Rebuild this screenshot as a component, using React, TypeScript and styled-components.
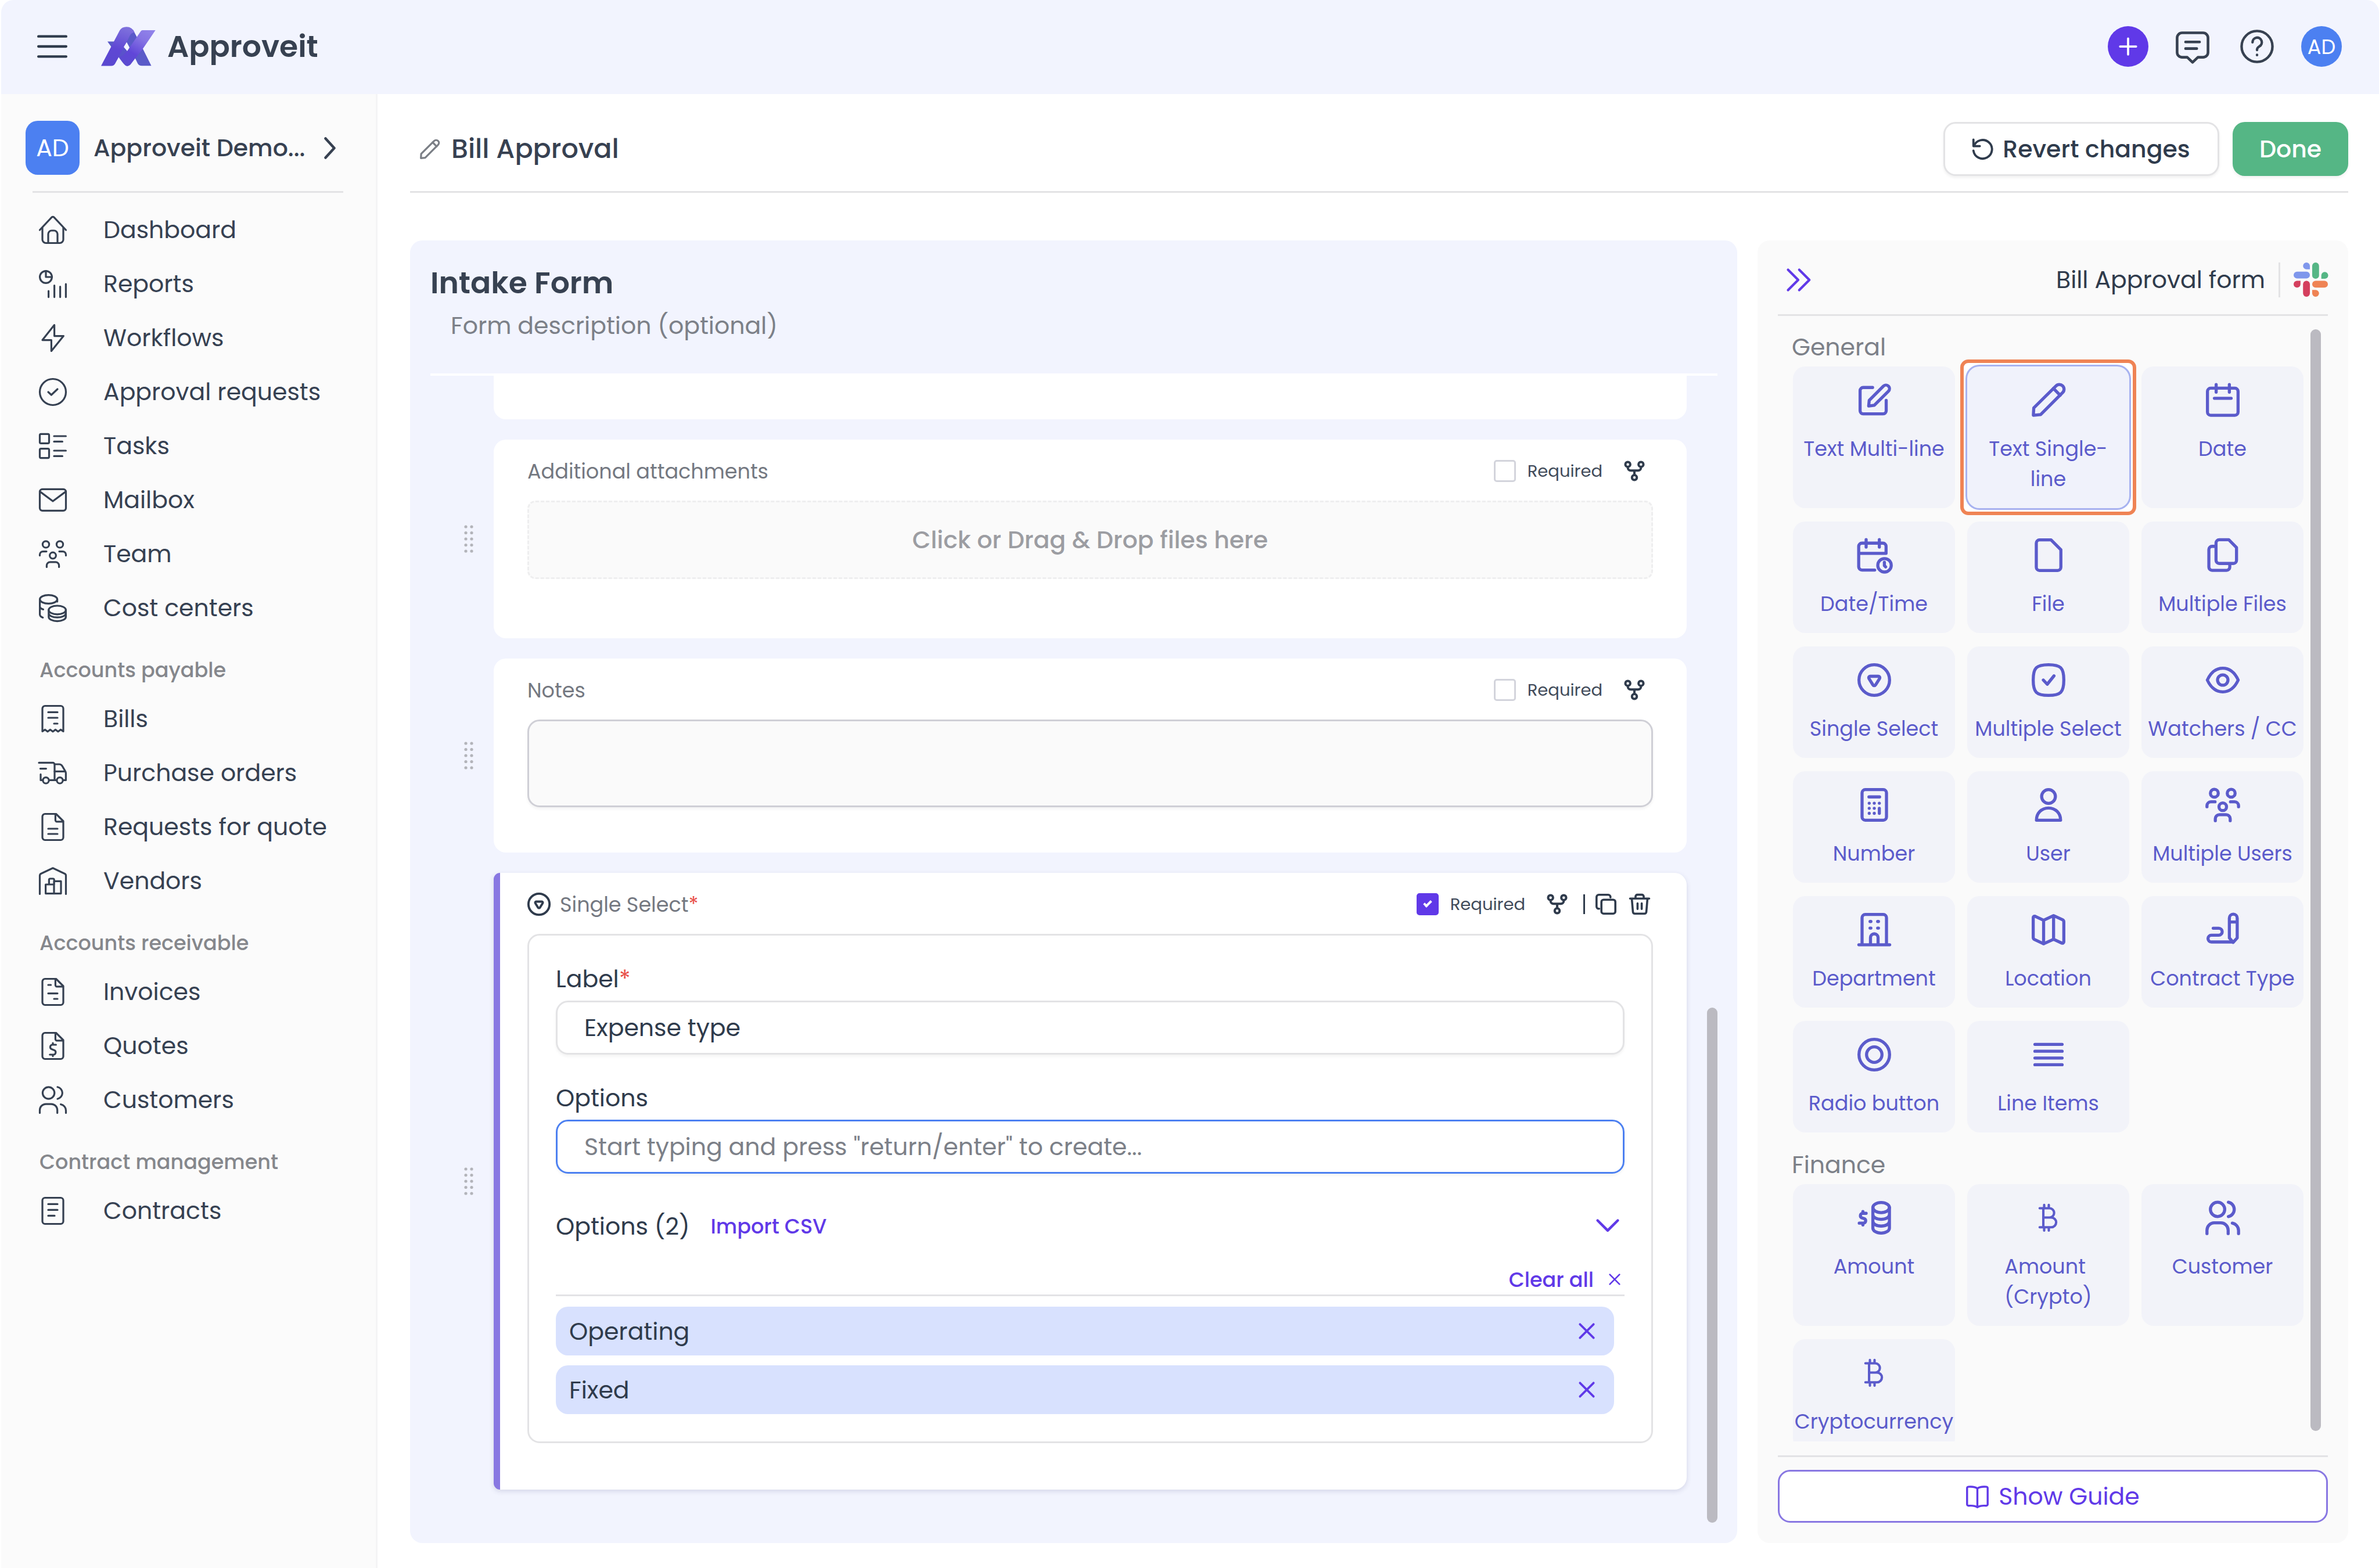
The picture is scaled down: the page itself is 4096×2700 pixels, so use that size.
import React, { useState } from "react";
import styled, { createGlobalStyle, css } from "styled-components";

const color = {
  ink: "#2f3b4c",
  nav: "#364152",
  heading: "#374151",
  muted: "#7c8088",
  line: "#e3e3e5",
  lavender: "#f2f4fe",
  panel: "#fafafa",
  indigo: "#5b5bcb",
  violet: "#6039e8",
  violetSoft: "#8877e2",
  blue: "#4c80f1",
  green: "#55b685",
  thumb: "#bbbac1",
};

const text = { sm: "29px", md: "35px", base: "41px", title: "46px", lg: "52px" };
const radius = "21px";

const GlobalStyle = createGlobalStyle`
  *, *::before, *::after { box-sizing: border-box; }
  html, body { margin: 0; background: #ffffff; }
  body, button, input, textarea {
    font-family: Poppins, Inter, "Open Sans", sans-serif;
    font-size: ${text.base};
    color: ${color.ink};
  }
  button { border: 0; padding: 0; background: none; cursor: pointer; }
  h1, h2, h3, p, ul { margin: 0; padding: 0; }
  ul { list-style: none; }
  a { color: inherit; text-decoration: none; }
  svg { display: block; flex: none; overflow: visible; }
`;

/* ---------- Icons ---------- */

const Stroke = styled.svg<{ $size: number; $weight: number }>`
  width: ${(p) => p.$size}px;
  height: ${(p) => p.$size}px;
  fill: none;
  stroke: currentColor;
  stroke-width: ${(p) => p.$weight};
  stroke-linecap: round;
  stroke-linejoin: round;
`;

const sheet =
  "M5.25.75h9.5L21 7v14a2.25 2.25 0 0 1-2.25 2.25H5.25A2.25 2.25 0 0 1 3 21V3A2.25 2.25 0 0 1 5.25.75z M14.2.9v5.2a1.3 1.3 0 0 0 1.3 1.3h5.3";

const glyphs: Record<string, React.ReactNode> = {
  menu: <path d="M1 4h22M1 12h22M1 20h22" />,
  plus: <path d="M12 1v22M1 12h22" />,
  close: <path d="M2 2l20 20M22 2L2 22" />,
  chevronRight: <path d="M7 1l10 11L7 23" />,
  chevronDown: <path d="M1 6l11 11L23 6" />,
  chevronsRight: <path d="M2 2l10 10L2 22M13 2l10 10-10 10" />,
  chat: (
    <>
      <path d="M4.5 2.3h15A3.5 3.5 0 0 1 23 5.8v10.4a3.5 3.5 0 0 1-3.5 3.5h-3.7L12 23.3l-3.8-3.6H4.5A3.5 3.5 0 0 1 1 16.2V5.8a3.5 3.5 0 0 1 3.5-3.5z" />
      <path d="M7 8.8h10M7 13.5h8" />
    </>
  ),
  help: (
    <>
      <circle cx="12" cy="12" r="11" />
      <path d="M8.8 9a3.3 3.3 0 1 1 4.9 2.9c-1 .6-1.7 1.2-1.7 2.6" />
      <path d="M12 18v.1" />
    </>
  ),
  home: (
    <>
      <path d="M.75 12L10.9 1.2a1.5 1.5 0 0 1 2.2 0L23.25 12" />
      <path d="M3 10v10.25a3 3 0 0 0 3 3h12a3 3 0 0 0 3-3V10" />
      <path d="M8 23.25V15.5a3 3 0 0 1 3-3h2a3 3 0 0 1 3 3v7.75" />
    </>
  ),
  reports: (
    <>
      <circle cx="6" cy="6" r="5.2" />
      <path d="M6 .8V6h5.2M8.3 18v5.3M13.3 13.3v10M18.3 14.3v9M23.2 12v11.3" />
    </>
  ),
  bolt: <path d="M13.3.75L3 13.8h7.7v9.4L21.2 10.3h-7.9z" />,
  checkCircle: (
    <>
      <circle cx="12" cy="12" r="11.25" />
      <path d="M8 12l2.7 2.5L16 9.5" />
    </>
  ),
  tasks: (
    <>
      <rect x=".75" y="1.7" width="8" height="8" rx="1" />
      <rect x=".75" y="14.3" width="8" height="8" rx="1" />
      <path d="M13 3.5h10.2M13 8.2h7.2M13 16h10.2M13 20.7h7.2" />
    </>
  ),
  mail: (
    <>
      <rect x=".75" y="2.7" width="22.5" height="18.5" rx="2.3" />
      <path d="M1.5 5.2L12 13l10.5-7.8" />
    </>
  ),
  team: (
    <>
      <circle cx="6" cy="3.7" r="2.8" />
      <circle cx="18" cy="3.7" r="2.8" />
      <circle cx="12" cy="13.3" r="2.7" />
      <path d="M.75 13.3v-.8A2.8 2.8 0 0 1 3.5 9.8h3M23.25 13.3v-.8a2.8 2.8 0 0 0-2.75-2.7h-3M6.7 23.25v-1.4a2.9 2.9 0 0 1 2.9-2.9h4.8a2.9 2.9 0 0 1 2.9 2.9v1.4" />
    </>
  ),
  coins: (
    <>
      <ellipse cx="8.3" cy="4.5" rx="7.5" ry="3.7" />
      <path d="M.8 4.5v13c0 1.2.9 2.1 2.6 2.7M.8 10.5c0 1.2 1 2.1 2.9 2.7M15.8 4.7v1.8" />
      <ellipse cx="15.8" cy="13.7" rx="7.4" ry="3.7" />
      <path d="M8.4 13.7v5.9c0 2 3.3 3.7 7.4 3.7s7.4-1.7 7.4-3.7v-5.9M8.4 16.5c0 2 3.3 3.6 7.4 3.6s7.4-1.6 7.4-3.6" />
    </>
  ),
  receipt: (
    <>
      <path d="M3 22.7V3A2.25 2.25 0 0 1 5.25.75h13.5A2.25 2.25 0 0 1 21 3v19.7l-2.2-1.5-2.3 1.7-2.2-1.7-2.3 1.7-2.2-1.7-2.3 1.7-2.2-1.7z" />
      <path d="M8 6.2h8M8 11h8M13 16h3" />
    </>
  ),
  truck: (
    <>
      <path d="M0 3.2h12a1.5 1.5 0 0 1 1.5 1.5v13.5M1.2 8.3h5M1.5 13.2v5h2M8.7 18.2h6.7" />
      <path d="M13.5 4.5h4a3 3 0 0 1 2.5 1.4l2.6 4.4c.4.6.6 1.2.6 1.9v6h-2.5M13.5 10.7h9" />
      <circle cx="6" cy="18.4" r="2.6" />
      <circle cx="18" cy="18.4" r="2.6" />
    </>
  ),
  fileText: <path d={`${sheet}M8 13.5h8M8 18h8`} />,
  warehouse: (
    <>
      <path d="M.75 23.25V7.4c0-.8.5-1.5 1.2-1.8L12 .9l10 4.7c.8.3 1.25 1 1.25 1.8v15.85" />
      <path d="M5.8 15h7.2v7.8H5.8zM8.7 15V11a1 1 0 0 1 1-1h2.4a1 1 0 0 1 1 1v4M13 12.2h6v10.6h-6z" />
    </>
  ),
  invoice: <path d={`${sheet}M8 6h2.3M8 13.3h8M13 18h3`} />,
  quote: (
    <>
      <path d={sheet} />
      <path d="M14.7 11h-3.2a2 2 0 0 0-.6 3.800l2.4.9a2 2 0 0 1-.7 3.8H9.4M12 9.500V11M12 19.500v1.300" />
    </>
  ),
  people: (
    <>
      <circle cx="8.3" cy="6" r="5.1" />
      <path d="M16 .9a5.2 5.2 0 0 1 0 10.2M.75 23.25v-2.5a5.2 5.2 0 0 1 5.2-5.2h4.7a5.2 5.2 0 0 1 5.2 5.2v2.5M18.8 15.8a5.4 5.4 0 0 1 4.45 5.3v2.15" />
    </>
  ),
  contract: (
    <>
      <rect x="3" y=".75" width="18" height="22.5" rx="2.25" />
      <path d="M8 6.2h8M8 11.2h8M8 16.2h5.5" />
    </>
  ),
  pencil: (
    <>
      <path d="M1.2 22.8l.3-5.3L17.3 1.9a3.3 3.3 0 0 1 4.8 4.7L6.4 22.3z" />
      <path d="M15.5 3.7l4.8 4.8" />
    </>
  ),
  undo: (
    <>
      <path d="M1.2 1v7.6h7.5" />
      <path d="M1.8 8.5A11 11 0 1 1 1.2 14" />
    </>
  ),
  fork: (
    <>
      <circle cx="4" cy="4" r="3" />
      <circle cx="20" cy="4" r="3" />
      <circle cx="12" cy="20" r="3" />
      <path d="M4 7v1a3.5 3.5 0 0 0 3.5 3.5h9A3.5 3.5 0 0 0 20 8V7M12 11.5V17" />
    </>
  ),
  copy: (
    <>
      <rect x="6.8" y="6.8" width="16" height="16" rx="2.5" />
      <path d="M4.2 17.2h-.5a2.5 2.5 0 0 1-2.5-2.5v-11a2.5 2.5 0 0 1 2.5-2.5h11a2.5 2.5 0 0 1 2.5 2.5v.5" />
    </>
  ),
  trash: (
    <path d="M1 5.5h22M3 5.5l1.3 15.2a2.3 2.3 0 0 0 2.3 2.1h10.8a2.3 2.3 0 0 0 2.3-2.1L21 5.5M7.3 5.5V3.3a2.2 2.2 0 0 1 2.2-2.2h5a2.2 2.2 0 0 1 2.2 2.2v2.2M9.6 11v6.5M14.4 11v6.5" />
  ),
  selectCircle: (
    <>
      <circle cx="12" cy="12" r="10.9" />
      <path d="M9.1 9.3h5.8c.9 0 1.3.9.9 1.6l-2.8 4.5c-.5.8-1.5.8-2 0l-2.8-4.5c-.4-.7 0-1.6.9-1.6z" />
    </>
  ),
  edit: (
    <>
      <path d="M10.8 3H4.1a2.2 2.2 0 0 0-2.2 2.2v14.4a2.2 2.2 0 0 0 2.2 2.2h14.2a2.2 2.2 0 0 0 2.2-2.2v-7.4" />
      <path d="M8 16.2l.4-4L18.5 2a2.5 2.5 0 0 1 3.6 3.6L12 15.7z" />
    </>
  ),
  calendar: (
    <>
      <rect x="1.1" y="3.5" width="21.8" height="19.3" rx="2.3" />
      <path d="M7.3.9v5.4M16.7.9v5.4M6 10.7h12" />
    </>
  ),
  calendarClock: (
    <>
      <path d="M12.3 22.6H3.2a2.3 2.3 0 0 1-2.3-2.3V5.7a2.3 2.3 0 0 1 2.3-2.3h14.9a2.3 2.3 0 0 1 2.3 2.3v5H1M6.2.9v5.3M15.6.9v5.3" />
      <circle cx="19.3" cy="19.2" r="4.8" />
      <path d="M19.2 17v2.4l.9.9" />
    </>
  ),
  file: (
    <path d="M5.6 1.1h8.2l7 7v12.5a2.3 2.3 0 0 1-2.3 2.3H5.6a2.3 2.3 0 0 1-2.3-2.3V3.4a2.3 2.3 0 0 1 2.3-2.3z" />
  ),
  files: (
    <>
      <path d="M9.5 1h6.8l5.5 5.6v9a2.3 2.3 0 0 1-2.3 2.3h-10a2.3 2.3 0 0 1-2.3-2.3V3.3A2.3 2.3 0 0 1 9.5 1z" />
      <path d="M6.8 5.7H4.4a2.3 2.3 0 0 0-2.3 2.3v12.5a2.3 2.3 0 0 0 2.3 2.3h10.3a2.3 2.3 0 0 0 2.3-2.3v-2.3" />
    </>
  ),
  checkSquare: (
    <>
      <path d="M12 1.1c8.7 0 10.9 2.2 10.9 10.9S20.7 22.9 12 22.9 1.1 20.7 1.1 12 3.3 1.1 12 1.1z" />
      <path d="M8.3 12l2.8 3 4.8-6" />
    </>
  ),
  eye: (
    <>
      <path d="M1 12c2.4-5.2 6.2-8.4 11-8.4S20.6 6.8 23 12c-2.4 5.2-6.2 8.4-11 8.4S3.4 17.2 1 12z" />
      <circle cx="12" cy="12" r="3.7" />
    </>
  ),
  calculator: (
    <>
      <rect x="3.3" y="1.1" width="17.4" height="21.8" rx="2.3" />
      <path d="M8.2 6.3h7.6M8.4 10.8v.01M12 10.8v.01M15.6 10.8v.01M8.4 14.4v.01M12 14.4v.01M8.4 18v.01M12 18v.01M15.6 14.4V18" />
    </>
  ),
  user: (
    <>
      <circle cx="12" cy="6" r="4.9" />
      <path d="M3.4 22.9c0-5.1 3.7-8.7 8.6-8.7s8.6 3.6 8.6 8.7z" />
    </>
  ),
  building: (
    <path d="M3.3 22.6V3.4a2.3 2.3 0 0 1 2.3-2.3h12.8a2.3 2.3 0 0 1 2.3 2.3v19.2M1 22.7h22M9.3 22.6v-5a2.7 2.7 0 0 1 5.4 0v5M9 6.1h.6M14.4 6.1h.6M9 10.8h.6M14.4 10.8h.6" />
  ),
  map: (
    <path d="M8.5 5.2L2.5 2.4c-.7-.3-1.4.2-1.4.9v14.2c0 .7.4 1.2 1 1.5l6.4 3 7.1-3.2 5.9 2.7c.7.3 1.4-.2 1.4-.9V6.3c0-.7-.4-1.2-1-1.5l-6.3-2.9zM8.5 5.2V22M15.6 1.9v16.9" />
  ),
  signature: (
    <>
      <path d="M5.2 10.9h3.9a2.5 2.5 0 0 1 0 5H3.9a2.4 2.4 0 0 0 0 4.8h15.5" />
      <path d="M16.7 17.8V3.7a2.8 2.8 0 0 1 5.6 0v14.1l-2.9 3.2zM16.7 6.5h5.6" />
    </>
  ),
  radio: (
    <>
      <circle cx="12" cy="12" r="10.9" />
      <circle cx="12" cy="12" r="5.5" />
    </>
  ),
  lines: <path d="M2.3 4.7h19.4M2.3 9.6h19.4M2.3 14.4h19.4M2.3 19.2h19.4" />,
  amount: (
    <>
      <ellipse cx="16.9" cy="4.7" rx="5.9" ry="3.6" />
      <path d="M11 4.7v14.6c0 2 2.6 3.6 5.9 3.6s5.9-1.6 5.9-3.6V4.7M11 9.6c0 2 2.6 3.5 5.9 3.5s5.9-1.5 5.9-3.5M11 14.4c0 2 2.6 3.5 5.9 3.5s5.9-1.5 5.9-3.5" />
      <path d="M6.2 8.8H3.5a1.7 1.7 0 0 0-.4 3.2l1.8.6a1.7 1.7 0 0 1-.4 3.2H1.3M3.9 7.5v1.3M3.9 15.8v1.3" />
    </>
  ),
  bitcoin: (
    <path d="M5.7 5.2h7a3.3 3.3 0 0 1 0 6.6H8.3M12.7 11.8h1.3a3.4 3.4 0 0 1 0 6.9H5.7M8.3 5.2v13.5M8.9 2.8v2.4M12.2 2.8v2.4M8.9 18.700v2.400M12.2 18.700v2.400" />
  ),
  book: (
    <path d="M12 3.8C10 2 6.5 1.6 2.5 1.9c-.8.1-1.4.7-1.4 1.5v17.2c0 .8.7 1.4 1.5 1.4 3.9-.3 7.4.1 9.4 1.7M12 3.8c2-1.8 5.5-2.2 9.5-1.9.8.1 1.4.7 1.4 1.5v17.2c0 .8-.7 1.4-1.5 1.4-3.9-.3-7.4.1-9.4 1.7M12 3.8v19.9" />
  ),
};

function Icon({ name, size = 48, weight = 1.6 }: { name: string; size?: number; weight?: number }) {
  return (
    <Stroke viewBox="0 0 24 24" $size={size} $weight={weight} aria-hidden="true">
      {glyphs[name]}
    </Stroke>
  );
}

function BrandMark() {
  return (
    <svg width="94" height="68" viewBox="92 72 528 382" aria-hidden="true">
      <defs>
        <linearGradient id="legGradient" x1="0.6" y1="0" x2="0.3" y2="1">
          <stop offset="0" stopColor="#7d6fdc" />
          <stop offset="0.55" stopColor="#5f47d4" />
          <stop offset="1" stopColor="#5a48d0" />
        </linearGradient>
        <linearGradient id="armGradient" x1="0.9" y1="0" x2="0.3" y2="1">
          <stop offset="0" stopColor="#9183ea" />
          <stop offset="0.3" stopColor="#8674e4" />
          <stop offset="0.7" stopColor="#6046d8" />
          <stop offset="1" stopColor="#5c4bd0" />
        </linearGradient>
      </defs>
      <path d="M154 215h66l122 90-80 62z" fill="#5a5ac8" />
      <path d="M400 100l40 75 56 110 82 165H486q-28 0-40-22l-18-38-90-170 20-80z" fill="#5a5ac8" />
      <path d="M92 451h98q26 0 38-22l34-62 76-142 28-58q14-34 38-38l12-2q-22-54-78-54-46 0-66 36z" fill="url(#legGradient)" />
      <path d="M618 106H492q-10 0-16 10L346 305l-84 62q34 46 52 68 28 36 62 4l40-52 82-104z" fill="url(#armGradient)" />
      <path d="M312 270l-50 97q40-4 84-62z" fill="#5a52cb" />
      <path d="M340 224l24 44-20 38-32-40z" fill={color.lavender} />
    </svg>
  );
}

function SlackMark() {
  return (
    <svg width="59" height="59" viewBox="0 0 60 60" aria-label="Slack" role="img">
      <g fill="#7f97ec">
        <path d="M22.5 0a6 6 0 0 1 6 6v6h-6a6 6 0 0 1 0-12z" />
        <rect x="0" y="16" width="28.5" height="12" rx="6" />
      </g>
      <g fill="#55b685">
        <rect x="32.5" y="0" width="12" height="28.5" rx="6" />
        <path d="M48.5 28.5v-6a6 6 0 1 1 6 6z" />
      </g>
      <g fill="#d43f5e">
        <path d="M0 38a6 6 0 0 1 6-6h6v6a6 6 0 0 1-12 0z" />
        <rect x="16.5" y="32" width="12" height="28" rx="6" />
      </g>
      <g fill="#ef8354">
        <rect x="32.5" y="32" width="27.5" height="12" rx="6" />
        <path d="M32.5 48h6a6 6 0 1 1-6 6z" />
      </g>
    </svg>
  );
}

/* ---------- Frame ---------- */

const Shell = styled.div`
  display: flex;
  flex-direction: column;
  height: 100vh;
  padding-left: 2px;
  background: #ffffff;
`;

const TopBar = styled.header`
  display: flex;
  align-items: center;
  justify-content: space-between;
  flex: none;
  height: 162px;
  padding: 0 64px 2px 62px;
  background: ${color.lavender};
  border-radius: ${radius} ${radius} 0 0;
`;

const BarGroup = styled.div<{ $gap: number }>`
  display: flex;
  align-items: center;
  gap: ${(p) => p.$gap}px;
`;

const Brand = styled.a`
  display: flex;
  align-items: center;
  gap: 20px;
  font-size: ${text.lg};
  font-weight: 600;
  color: ${color.heading};
`;

const RoundButton = styled.button<{ $fill?: string }>`
  display: flex;
  align-items: center;
  justify-content: center;
  width: 70px;
  height: 70px;
  border-radius: 50%;
  background: ${(p) => p.$fill ?? "transparent"};
  color: ${(p) => (p.$fill ? "#ffffff" : color.heading)};
  font-size: ${text.md};
`;

const Body = styled.div`
  display: flex;
  flex: 1;
  min-height: 0;
`;

/* ---------- Sidebar ---------- */

const Sidebar = styled.nav`
  flex: none;
  width: 648px;
  padding: 46px 56px 0 42px;
  background: #fbfbfb;
  border-right: 3px solid #f4f4f5;
  color: ${color.nav};
`;

const Workspace = styled.button`
  display: flex;
  align-items: center;
  width: 100%;
  padding-right: 6px;
  gap: 24px;
  font-weight: 500;
  color: ${color.heading};
`;

const WorkspaceBadge = styled.span`
  display: grid;
  place-items: center;
  flex: none;
  width: 93px;
  height: 93px;
  border-radius: ${radius};
  background: ${color.blue};
  color: #ffffff;
  font-weight: 400;
`;

const WorkspaceName = styled.span`
  flex: 1;
  text-align: left;
  white-space: nowrap;
`;

const Rule = styled.hr`
  height: 3px;
  margin: 28px 0 17px 12px;
  border: 0;
  background: ${color.line};
`;

const NavSection = styled.h3`
  height: 98px;
  padding: 36px 0 0 24px;
  font-size: ${text.md};
  line-height: 50px;
  font-weight: 500;
  color: #85878c;
`;

const NavLink = styled.a`
  display: flex;
  align-items: center;
  gap: 63px;
  height: 93px;
  padding-left: 23px;
  white-space: nowrap;
`;

/* ---------- Main ---------- */

const Main = styled.main`
  display: flex;
  flex-direction: column;
  flex: 1;
  min-width: 0;
  padding: 0 53px 43px 56px;
`;

const PageHead = styled.div`
  display: flex;
  align-items: center;
  justify-content: space-between;
  flex: none;
  height: 170px;
  padding-top: 22px;
  border-bottom: 3px solid ${color.line};
`;

const PageTitle = styled.h1`
  display: flex;
  align-items: center;
  gap: 20px;
  padding-left: 17px;
  font-size: ${text.title};
  font-weight: 500;
  color: ${color.heading};

  svg { color: #7b7f86; }
`;

const actionButton = css`
  display: flex;
  align-items: center;
  justify-content: center;
  height: 93px;
  border-radius: ${radius};
  font-weight: 500;
  box-shadow: 0 3px 5px rgba(0, 0, 0, 0.06);
`;

const RevertButton = styled.button`
  ${actionButton}
  gap: 17px;
  width: 475px;
  border: 3px solid ${color.line};
  background: #ffffff;
`;

const DoneButton = styled.button`
  ${actionButton}
  width: 199px;
  background: ${color.green};
  color: #ffffff;
`;

const Columns = styled.div`
  display: flex;
  flex: 1;
  gap: 35px;
  min-height: 0;
  padding-top: 82px;
`;

const ScrollThumb = styled.div`
  width: 18px;
  border-radius: 9px;
  background: ${color.thumb};
`;

/* ---------- Form builder ---------- */

const Builder = styled.section`
  display: flex;
  flex-direction: column;
  flex: 1;
  min-width: 0;
  border-radius: ${radius};
  background: ${color.lavender};
`;

const BuilderHead = styled.div`
  flex: none;
  height: 233px;
  margin: 0 34px 0 35px;
  padding-top: 38px;
  border-bottom: 4px solid #ffffff;
`;

const BuilderTitle = styled.h2`
  font-size: ${text.lg};
  line-height: 70px;
  font-weight: 600;
  color: ${color.heading};
`;

const BuilderDescription = styled.input`
  display: block;
  width: 100%;
  height: 76px;
  padding: 0 35px;
  border: 0;
  background: transparent;

  &::placeholder { color: ${color.muted}; opacity: 1; }
`;

const BuilderBody = styled.div`
  display: flex;
  flex: 1;
  min-height: 0;
  overflow: hidden;
`;

const FieldList = styled.ul`
  display: flex;
  flex-direction: column;
  flex: 1;
  min-width: 0;
  gap: 35px;
`;

const FieldRow = styled.li`
  display: flex;
  align-items: center;
  gap: 35px;
  padding-left: 93px;
`;

const DragSpacer = styled.span`
  width: 16px;
`;

const BuilderTrack = styled.div`
  display: flex;
  align-items: flex-end;
  width: 87px;
  padding: 0 34px 35px 35px;

  ${ScrollThumb} { height: 887px; }
`;

const card = css`
  flex: 1;
  min-width: 0;
  border-radius: ${radius};
  background: #ffffff;
`;

const HiddenCard = styled.div`
  ${card}
  height: 75px;
  border-radius: 0 0 ${radius} ${radius};
`;

const Card = styled.div<{ $bottom: number; $active?: boolean }>`
  ${card}
  padding: 0 58px ${(p) => p.$bottom}px;
  ${(p) =>
    p.$active &&
    css`
      padding-left: 47px;
      border-left: 11px solid ${color.violetSoft};
      border-radius: 11px ${radius} ${radius} 11px;
      box-shadow: 0 3px 8px rgba(60, 60, 120, 0.16);
    `}
`;

const CardHead = styled.div`
  display: flex;
  align-items: center;
  justify-content: space-between;
  height: 105px;
  padding-top: 3px;
`;

const CardLabel = styled.span`
  display: flex;
  align-items: center;
  gap: 16px;
  font-size: ${text.md};
  color: #747881;

  svg { color: ${color.ink}; }
`;

const CardTools = styled.div<{ $inset: number }>`
  display: flex;
  align-items: center;
  padding-right: ${(p) => p.$inset}px;
  color: ${color.ink};
`;

const RequiredLabel = styled.label`
  display: flex;
  align-items: center;
  gap: 20px;
  margin-right: 38px;
  font-size: ${text.sm};
  color: #414b5a;
`;

const Tick = styled.input`
  display: grid;
  place-items: center;
  width: 38px;
  height: 38px;
  margin: 0;
  appearance: none;
  border: 3px solid #d3d4dc;
  border-radius: 5px;
  background: #ffffff;

  &:checked { border-color: ${color.violet}; background: ${color.violet}; }
  &:checked::before {
    content: "";
    width: 14px;
    height: 8px;
    margin-bottom: 4px;
    border: solid #ffffff;
    border-width: 0 0 4px 4px;
    transform: rotate(-45deg);
  }
`;

const ToolDivider = styled.span`
  width: 3px;
  height: 34px;
  margin: 0 18px 0 28px;
  background: ${color.ink};
`;

const ToolButton = styled.button<{ $after?: number }>`
  margin-right: ${(p) => p.$after ?? 0}px;
`;

const DropZone = styled.button`
  display: block;
  width: 100%;
  height: 135px;
  border: 3px dashed #eeeeef;
  border-radius: 14px;
  background: ${color.panel};
  font-weight: 500;
  color: #9c9da2;
`;

const NotesBox = styled.textarea`
  display: block;
  width: 100%;
  height: 151px;
  padding: 24px 46px;
  resize: none;
  border: 3px solid #cfcfd6;
  border-radius: ${radius};
  background: ${color.panel};
  box-shadow: 0 3px 5px rgba(0, 0, 0, 0.05);
`;

const Settings = styled.div`
  padding: 44px 46px 47px;
  border: 3px solid ${color.line};
  border-radius: ${radius};
`;

const SettingLabel = styled.label`
  display: block;
  height: 68px;
  line-height: 62px;
`;

const Star = styled.span`
  color: #e9514a;
`;

const TextBox = styled.input<{ $focused?: boolean; $after: number }>`
  display: block;
  width: 100%;
  height: 93px;
  margin-bottom: ${(p) => p.$after}px;
  padding: 0 46px;
  outline: 0;
  border: 3px solid ${(p) => (p.$focused ? color.blue : color.line)};
  border-radius: ${radius};
  background: #ffffff;
  box-shadow: 0 3px 5px rgba(0, 0, 0, 0.05);

  &::placeholder { color: ${color.muted}; opacity: 1; }
`;

const OptionsHead = styled.div`
  display: flex;
  align-items: center;
  height: 60px;
  gap: 36px;
`;

const ToggleButton = styled.button`
  margin: 0 10px 0 auto;
  color: ${color.violet};
`;

const AccentButton = styled.button`
  display: flex;
  align-items: center;
  gap: 26px;
  font-size: ${text.md};
  font-weight: 500;
  color: ${color.violet};
`;

const ClearRow = styled.div`
  display: flex;
  align-items: center;
  justify-content: flex-end;
  height: 91px;
  padding: 36px 7px 0 0;
  border-bottom: 3px solid ${color.line};
`;

const Chips = styled.ul`
  display: flex;
  flex-direction: column;
  gap: 17px;
  padding: 18px 18px 0 0;
`;

const Chip = styled.li`
  display: flex;
  align-items: center;
  justify-content: space-between;
  height: 84px;
  padding: 0 33px 0 23px;
  border-radius: ${radius};
  background: #d8e1fe;
`;

const ChipRemove = styled.button`
  color: ${color.violet};
`;

/* ---------- Palette ---------- */

const Palette = styled.aside`
  display: flex;
  flex-direction: column;
  flex: none;
  width: 1017px;
  padding: 0 35px 35px;
  border-radius: ${radius};
  background: ${color.panel};
`;

const PaletteHead = styled.div`
  display: flex;
  align-items: center;
  justify-content: space-between;
  flex: none;
  height: 130px;
  padding: 8px 0 0 14px;
  border-bottom: 3px solid ${color.line};
`;

const CollapseButton = styled.button`
  color: ${color.violet};
`;

const SourceDivider = styled.span`
  width: 3px;
  height: 60px;
  background: ${color.line};
`;

const PaletteBody = styled.div`
  display: flex;
  flex: 1;
  justify-content: space-between;
  min-height: 0;
  padding-right: 12px;
  overflow: hidden;
`;

const Groups = styled.div`
  flex: 1;
  min-width: 0;
  padding-right: 12px;
`;

const GroupTitle = styled.h3<{ $first?: boolean }>`
  height: ${(p) => (p.$first ? 87 : 89)}px;
  padding: ${(p) => (p.$first ? 22 : 24)}px 0 0 24px;
  line-height: 64px;
  font-size: ${text.base};
  font-weight: 400;
  color: ${color.muted};
`;

const Tiles = styled.div`
  display: grid;
  grid-template-columns: repeat(3, minmax(0, 1fr));
  gap: 23px 21px;
  padding-left: 26px;
  isolation: isolate;
`;

const Tile = styled.button<{ $selected?: boolean }>`
  position: relative;
  display: flex;
  flex-direction: column;
  align-items: center;
  gap: 29px;
  min-height: 192px;
  padding: 29px 0 24px;
  border-radius: ${radius};
  background: #f2f3f9;
  font-size: ${text.md};
  line-height: 52px;
  color: ${color.indigo};

  ${(p) =>
    p.$selected &&
    css`
      background: #f0f2fb;
      box-shadow: 0 0 0 3px #a7b2f0;

      &::after {
        content: "";
        position: absolute;
        inset: -12px;
        z-index: -1;
        border: 6px solid #ef8354;
        border-radius: 14px;
        background: #ffffff;
      }
    `}
`;

const TileText = styled.span<{ $start?: boolean }>`
  white-space: pre;
  text-align: ${(p) => (p.$start ? "left" : "center")};
`;

const PaletteTrack = styled.div`
  padding-top: 23px;

  ${ScrollThumb} { height: calc(100% - 18px); }
`;

const GuideArea = styled.div`
  flex: none;
  margin-top: 24px;
  padding-top: 22px;
  border-top: 3px solid ${color.line};
`;

const GuideButton = styled.button`
  display: flex;
  align-items: center;
  justify-content: center;
  gap: 17px;
  width: 100%;
  height: 91px;
  border: 3px solid ${color.violetSoft};
  border-radius: ${radius};
  background: #ffffff;
  color: ${color.violet};
`;

/* ---------- Data ---------- */

const navigation: { title?: string; items: [string, string][] }[] = [
  {
    items: [
      ["home", "Dashboard"],
      ["reports", "Reports"],
      ["bolt", "Workflows"],
      ["checkCircle", "Approval requests"],
      ["tasks", "Tasks"],
      ["mail", "Mailbox"],
      ["team", "Team"],
      ["coins", "Cost centers"],
    ],
  },
  {
    title: "Accounts payable",
    items: [
      ["receipt", "Bills"],
      ["truck", "Purchase orders"],
      ["fileText", "Requests for quote"],
      ["warehouse", "Vendors"],
    ],
  },
  {
    title: "Accounts receivable",
    items: [
      ["invoice", "Invoices"],
      ["quote", "Quotes"],
      ["people", "Customers"],
    ],
  },
  { title: "Contract management", items: [["contract", "Contracts"]] },
];

type TileData = { icon: string; label: string; selected?: boolean; start?: boolean };

const generalTiles: TileData[] = [
  { icon: "edit", label: "Text Multi-line" },
  { icon: "pencil", label: "Text Single-\nline", selected: true },
  { icon: "calendar", label: "Date" },
  { icon: "calendarClock", label: "Date/Time" },
  { icon: "file", label: "File" },
  { icon: "files", label: "Multiple Files" },
  { icon: "selectCircle", label: "Single Select" },
  { icon: "checkSquare", label: "Multiple Select" },
  { icon: "eye", label: "Watchers / CC" },
  { icon: "calculator", label: "Number" },
  { icon: "user", label: "User" },
  { icon: "team", label: "Multiple Users" },
  { icon: "building", label: "Department" },
  { icon: "map", label: "Location" },
  { icon: "signature", label: "Contract Type" },
  { icon: "radio", label: "Radio button" },
  { icon: "lines", label: "Line Items" },
];

const financeTiles: TileData[] = [
  { icon: "amount", label: "Amount" },
  { icon: "bitcoin", label: "Amount\n(Crypto)", start: true },
  { icon: "people", label: "Customer" },
  { icon: "bitcoin", label: "Cryptocurrency" },
];

/* ---------- Parts ---------- */

function DragHandle() {
  return (
    <svg width="16" height="48" viewBox="0 0 16 48" fill="#b3b4ba" aria-hidden="true">
      {[3, 13.5, 24, 34.5, 45].map((y) => (
        <React.Fragment key={y}>
          <circle cx="3" cy={y} r="2.6" />
          <circle cx="13" cy={y} r="2.6" />
        </React.Fragment>
      ))}
    </svg>
  );
}

function Required({ initial = false }: { initial?: boolean }) {
  const [on, setOn] = useState(initial);
  return (
    <RequiredLabel>
      <Tick type="checkbox" checked={on} onChange={() => setOn(!on)} />
      Required
    </RequiredLabel>
  );
}

function ConditionsButton() {
  return (
    <ToolButton type="button" aria-label="Conditions">
      <Icon name="fork" size={34} weight={2.8} />
    </ToolButton>
  );
}

function TileGrid({ tiles }: { tiles: TileData[] }) {
  return (
    <Tiles>
      {tiles.map((t) => (
        <Tile key={t.label} type="button" $selected={t.selected}>
          <Icon name={t.icon} size={58} weight={t.icon === "bitcoin" ? 1.7 : 2.2} />
          <TileText $start={t.start}>{t.label}</TileText>
        </Tile>
      ))}
    </Tiles>
  );
}

function SingleSelectSettings() {
  const [label, setLabel] = useState("Expense type");
  const [options, setOptions] = useState(["Operating", "Fixed"]);
  return (
    <Settings>
      <SettingLabel htmlFor="field-label">
        Label<Star>*</Star>
      </SettingLabel>
      <TextBox id="field-label" $after={44} value={label} onChange={(e) => setLabel(e.target.value)} />
      <SettingLabel htmlFor="field-options">Options</SettingLabel>
      <TextBox
        id="field-options"
        $focused
        $after={60}
        placeholder={'Start typing and press "return/enter" to create...'}
      />
      <OptionsHead>
        <span>Options ({options.length})</span>
        <AccentButton type="button">Import CSV</AccentButton>
        <ToggleButton type="button" aria-label="Toggle options">
          <Icon name="chevronDown" size={38} weight={2.8} />
        </ToggleButton>
      </OptionsHead>
      <ClearRow>
        <AccentButton type="button" onClick={() => setOptions([])}>
          Clear all
          <Icon name="close" size={20} weight={3.2} />
        </AccentButton>
      </ClearRow>
      <Chips>
        {options.map((o) => (
          <Chip key={o}>
            {o}
            <ChipRemove type="button" aria-label={`Remove ${o}`} onClick={() => setOptions(options.filter((x) => x !== o))}>
              <Icon name="close" size={28} weight={3.2} />
            </ChipRemove>
          </Chip>
        ))}
      </Chips>
    </Settings>
  );
}

export default function App() {
  return (
    <>
      <GlobalStyle />
      <Shell>
        <TopBar>
          <BarGroup $gap={58}>
            <button type="button" aria-label="Menu">
              <Icon name="menu" size={52} weight={2} />
            </button>
            <Brand href="#">
              <BrandMark />
              Approveit
            </Brand>
          </BarGroup>
          <BarGroup $gap={41}>
            <RoundButton type="button" $fill={color.violet} aria-label="Create">
              <Icon name="plus" size={30} weight={3} />
            </RoundButton>
            <RoundButton type="button" aria-label="Messages">
              <Icon name="chat" size={58} weight={1.9} />
            </RoundButton>
            <RoundButton type="button" aria-label="Help">
              <Icon name="help" size={58} weight={1.8} />
            </RoundButton>
            <RoundButton type="button" $fill={color.blue}>AD</RoundButton>
          </BarGroup>
        </TopBar>

        <Body>
          <Sidebar>
            <Workspace type="button">
              <WorkspaceBadge>AD</WorkspaceBadge>
              <WorkspaceName>Approveit Demo...</WorkspaceName>
              <Icon name="chevronRight" size={36} weight={3} />
            </Workspace>
            <Rule />
            {navigation.map((group, i) => (
              <React.Fragment key={i}>
                {group.title && <NavSection>{group.title}</NavSection>}
                <ul>
                  {group.items.map(([icon, label]) => (
                    <li key={label}>
                      <NavLink href="#">
                        <Icon name={icon} />
                        {label}
                      </NavLink>
                    </li>
                  ))}
                </ul>
              </React.Fragment>
            ))}
          </Sidebar>

          <Main>
            <PageHead>
              <PageTitle>
                <Icon name="pencil" size={34} weight={2.3} />
                Bill Approval
              </PageTitle>
              <BarGroup $gap={23}>
                <RevertButton type="button">
                  <Icon name="undo" size={35} weight={2.6} />
                  Revert changes
                </RevertButton>
                <DoneButton type="button">Done</DoneButton>
              </BarGroup>
            </PageHead>

            <Columns>
              <Builder>
                <BuilderHead>
                  <BuilderTitle>Intake Form</BuilderTitle>
                  <BuilderDescription aria-label="Form description" placeholder="Form description (optional)" />
                </BuilderHead>
                <BuilderBody>
                  <FieldList>
                    <FieldRow>
                      <DragSpacer />
                      <HiddenCard />
                    </FieldRow>
                    <FieldRow>
                      <DragHandle />
                      <Card $bottom={102}>
                        <CardHead>
                          <CardLabel>Additional attachments</CardLabel>
                          <CardTools $inset={15}>
                            <Required />
                            <ConditionsButton />
                          </CardTools>
                        </CardHead>
                        <DropZone type="button">Click or Drag &amp; Drop files here</DropZone>
                      </Card>
                    </FieldRow>
                    <FieldRow>
                      <DragHandle />
                      <Card $bottom={78}>
                        <CardHead>
                          <CardLabel>Notes</CardLabel>
                          <CardTools $inset={15}>
                            <Required />
                            <ConditionsButton />
                          </CardTools>
                        </CardHead>
                        <NotesBox aria-label="Notes" />
                      </Card>
                    </FieldRow>
                    <FieldRow>
                      <DragHandle />
                      <Card $bottom={80} $active>
                        <CardHead>
                          <CardLabel>
                            <Icon name="selectCircle" size={40} weight={2.3} />
                            <span>
                              Single Select<Star>*</Star>
                            </span>
                          </CardLabel>
                          <CardTools $inset={5}>
                            <Required initial />
                            <ConditionsButton />
                            <ToolDivider />
                            <ToolButton type="button" aria-label="Duplicate" $after={22}>
                              <Icon name="copy" size={36} weight={2.4} />
                            </ToolButton>
                            <ToolButton type="button" aria-label="Delete">
                              <Icon name="trash" size={36} weight={2.4} />
                            </ToolButton>
                          </CardTools>
                        </CardHead>
                        <SingleSelectSettings />
                      </Card>
                    </FieldRow>
                  </FieldList>
                  <BuilderTrack>
                    <ScrollThumb />
                  </BuilderTrack>
                </BuilderBody>
              </Builder>

              <Palette>
                <PaletteHead>
                  <CollapseButton type="button" aria-label="Collapse palette">
                    <Icon name="chevronsRight" size={42} weight={2.4} />
                  </CollapseButton>
                  <BarGroup $gap={23}>
                    <span>Bill Approval form</span>
                    <SourceDivider />
                    <SlackMark />
                  </BarGroup>
                </PaletteHead>
                <PaletteBody>
                  <Groups>
                    <GroupTitle $first>General</GroupTitle>
                    <TileGrid tiles={generalTiles} />
                    <GroupTitle>Finance</GroupTitle>
                    <TileGrid tiles={financeTiles} />
                  </Groups>
                  <PaletteTrack>
                    <ScrollThumb />
                  </PaletteTrack>
                </PaletteBody>
                <GuideArea>
                  <GuideButton type="button">
                    <Icon name="book" size={39} weight={2.1} />
                    Show Guide
                  </GuideButton>
                </GuideArea>
              </Palette>
            </Columns>
          </Main>
        </Body>
      </Shell>
    </>
  );
}
